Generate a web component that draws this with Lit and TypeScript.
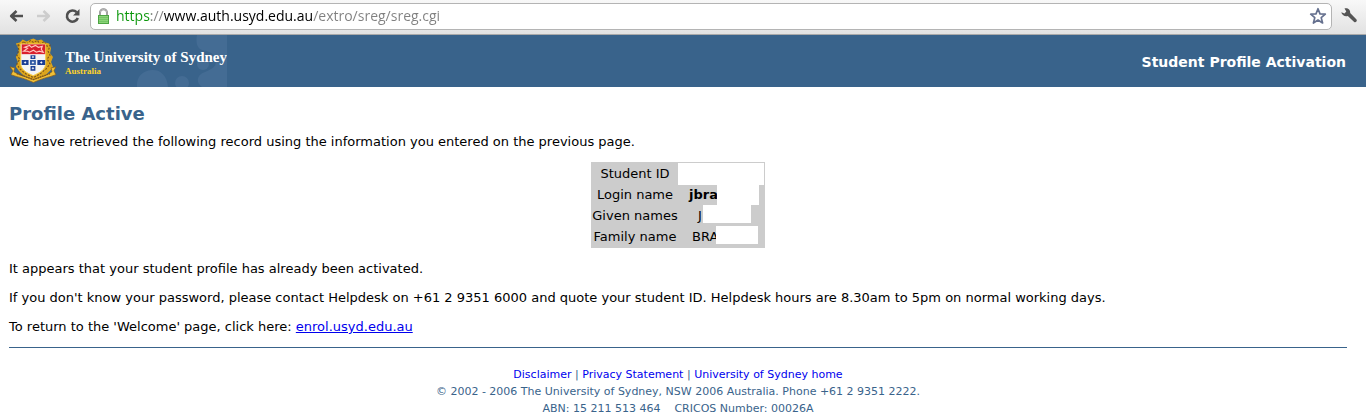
import { LitElement, html, css, svg } from "lit";
import { customElement } from "lit/decorators.js";
import { styleMap } from "lit/directives/style-map.js";

interface RecordRow {
  label: string;
  value: string;
  indent: number;
  gap: number;
  mask: number;
  height: number;
  strong?: boolean;
}

const rows: RecordRow[] = [
  { label: "Student ID", value: "", indent: 0, gap: 0, mask: 86, height: 22 },
  { label: "Login name", value: "jbra", indent: 11, gap: -1, mask: 42, height: 21, strong: true },
  { label: "Given names", value: "J", indent: 20, gap: 1, mask: 48, height: 18 },
  { label: "Family name", value: "BRA", indent: 14, gap: -2, mask: 42, height: 18 },
];

const star = (x: number, y: number) => svg`
  <path d="M${x} ${y - 1.5}l.5 1 1 .5-1 .5-.5 1-.5-1-1-.5 1-.5z" fill="#fff"></path>`;

@customElement("browser-bar")
export class BrowserBar extends LitElement {
  static styles = css`
    :host {
      display: flex;
      align-items: center;
      height: 35px;
      box-sizing: border-box;
      padding: 0 8px 2px;
      background: linear-gradient(#f8f8f8, #e2e2e2);
      border-bottom: 1px solid #a9a9a9;
    }
    .nav { display: flex; gap: 12px; margin-right: 9px; }
    button {
      display: block;
      padding: 0;
      border: 0;
      background: none;
      line-height: 0;
    }
    .address {
      flex: 1;
      display: flex;
      align-items: center;
      height: 27px;
      box-sizing: border-box;
      padding: 0 4px 0 6px;
      border: 1px solid #b4b4b4;
      border-radius: 5px;
      background: #fff;
    }
    .url {
      flex: 1;
      min-width: 0;
      height: 24px;
      margin-left: 6px;
      padding: 0;
      border: 0;
      outline: 0;
      font: 14px/24px "Open Sans", "Noto Sans", sans-serif;
      color: #808080;
      background: linear-gradient(90deg, #0a970a 35px, #808080 35px 48px, #000 48px 197px, #808080 197px);
      -webkit-background-clip: text;
      background-clip: text;
      -webkit-text-fill-color: transparent;
    }
    .tools { margin-left: 8px; }
  `;

  render() {
    return html`
      <div class="nav">
        <button aria-label="Back">
          <svg width="16" height="16" viewBox="0 0 16 16" fill="none" stroke="#505050" stroke-width="2.6" stroke-linejoin="round">
            <path d="M15 8H3.500M8.500 3 3.200 8l5.300 5"></path>
          </svg>
        </button>
        <button aria-label="Forward" disabled>
          <svg width="16" height="16" viewBox="0 0 16 16" fill="none" stroke="#cdcdcd" stroke-width="2.6" stroke-linejoin="round">
            <path d="M1 8h11.500M7.500 3l5.300 5-5.300 5"></path>
          </svg>
        </button>
        <button aria-label="Reload">
          <svg width="17" height="16" viewBox="0 0 17 16">
            <path d="M12.6 4.2A5.6 5.6 0 1 0 13.8 10" fill="none" stroke="#505050" stroke-width="2.6"></path>
            <path d="M15.5 1v6.5H9z" fill="#505050"></path>
          </svg>
        </button>
      </div>
      <div class="address">
        <svg width="13" height="17" viewBox="0 0 13 17">
          <path d="M3 8V4.8a3.5 3.5 0 0 1 7 0V8" fill="none" stroke="#8b8b8b" stroke-width="2"></path>
          <path d="M3 8V4.8a3.5 3.5 0 0 1 7 0V8" fill="none" stroke="#d0d0d0" stroke-width=".7"></path>
          <rect x="1.5" y="7.5" width="10" height="8" fill="#8bd478" stroke="#4da443"></rect>
          <path d="M2 9.5h9M2 11.5h9M2 13.5h9" stroke="#74c466"></path>
        </svg>
        <input class="url" type="text" aria-label="Address" spellcheck="false"
          value="https://www.auth.usyd.edu.au/extro/sreg/sreg.cgi">
        <button aria-label="Bookmark this page">
          <svg width="18" height="18" viewBox="0 0 18 18">
            <path d="M9 1.7l2 5.2 5.3.3-4.1 3.4 1.4 5.4L9 13l-4.600 3 1.400-5.400-4.100-3.400 5.300-.3z" fill="#fff"
              stroke="#66718f" stroke-width="1.7" stroke-linejoin="round"></path>
          </svg>
        </button>
      </div>
      <button class="tools" aria-label="Settings">
        <svg width="18" height="18" viewBox="0 0 18 18">
          <path d="M4.500 1.500c3-.9 6 1 5.700 4.500l6.300 6.500c1.200 1.400-.9 3.500-2.300 2.400L7.800 9C5 9.900 1.700 8.200 1.300 5.300l3.200 1.300 1.800-2z" fill="#555"></path>
        </svg>
      </button>
    `;
  }
}

@customElement("university-banner")
export class UniversityBanner extends LitElement {
  static styles = css`
    :host {
      display: flex;
      align-items: center;
      justify-content: space-between;
      height: 52px;
      background: #39638b;
      color: #fff;
    }
    .brand {
      display: grid;
      grid-template-columns: 227px;
      height: 52px;
      overflow: hidden;
    }
    .pattern, .identity { grid-area: 1 / 1; }
    .identity {
      display: flex;
      gap: 8px;
      padding: 3px 0 0 9px;
      color: inherit;
      text-decoration: none;
      z-index: 1;
    }
    .words { padding-top: 10px; white-space: nowrap; }
    .name, .country {
      display: block;
      font-family: "Liberation Serif", serif;
      font-weight: bold;
    }
    .name { font-size: 15px; line-height: 18px; }
    .country { font-size: 9px; line-height: 10px; color: #ffd42a; }
    .title {
      margin: 0;
      padding: 2px 20px 0 0;
      font: bold 14px/18px Verdana, "DejaVu Sans", sans-serif;
    }
  `;

  render() {
    return html`
      <div class="brand">
        <svg class="pattern" width="227" height="52" viewBox="0 0 227 52" fill="#446c94">
          <path d="M197 0h30v52h-25c-6-4-6-12 3-15 10-4 12-7 10-14-2-6-8-7-13-8-6-2-6-10-5-15z"></path>
          <path d="M137 52c-1-12 8-17 16-17s14 6 15 17z"></path>
          <circle cx="182" cy="48" r="7"></circle>
          <circle cx="203" cy="29" r="6"></circle>
        </svg>
        <a class="identity" href="#">
          <svg width="49" height="46" viewBox="0 0 49 46" aria-hidden="true">
            <path d="M7 5l4-1 3-3 4 2 4-2 3-1 4 2 4-1 4 3 4 1 2 5-1 5 3 4-2 5 2 5-3 4-4 4-6 4-5 2-6-2-7-4-4-4-3-4 2-5-2-5 3-5-1-5z" fill="#dca51c"></path>
            <path d="M9 6l3 2 3-5 3 3 4-4 3 2 4-2 3 4 4-3 3 5 3-1-2 6 2 4-3 4 3 5-4 5-6 5-7 4-8-4-6-5-3-5 3-5-3-4 2-5z" fill="none" stroke="#77501d" stroke-width="1.1" stroke-dasharray="2 1.5"></path>
            <path d="M12 5.500h25.500V25c0 7-6 10-12.800 13C18 35 12 32 12 25z" fill="#f4f4f2" stroke="#f6cf4b"></path>
            <path d="M13 6h24v10H13z" fill="#d91f2c"></path>
            <path d="M15 13l4-3-3-1 5-2 2 2 4-2 3 2 4-1-1 3 2 3-4-1-3 1-3-2-4 2-2-1z" fill="none" stroke="#ffc8c0" stroke-width="1.2"></path>
            <path d="M22 17h5v4h-5zM13 22h7v5h-7zM29 22h8v5h-8zM22 28h5v5h-5z" fill="#1b3f95"></path>
            <rect x="21.500" y="22" width="6" height="5" fill="#315aa4"></rect>
            ${star(24.5, 19)}${star(16.5, 24.5)}${star(24.5, 24.5)}${star(33, 24.5)}${star(24.5, 30.5)}
            <path d="M1 29l5 1-1 4c6 4 12 5 20 8 8-3 14-4 19-8l-1-4 5-1-2 4 2 4-6 2c-5 1-10 3-17 6-7-3-12-5-17-6l-6-2 2-4z" fill="#f0bf36" stroke="#81591c" stroke-width=".7"></path>
            <path d="M8 36c7 2 11 4 17 6 6-2 10-4 17-6" fill="none" stroke="#805616" stroke-width="1.3" stroke-dasharray="1.5 1"></path>
          </svg>
          <span class="words">
            <span class="name">The University of Sydney</span>
            <span class="country">Australia</span>
          </span>
        </a>
      </div>
      <h1 class="title">Student Profile Activation</h1>
    `;
  }
}

@customElement("app-root")
export class AppRoot extends LitElement {
  static styles = css`
    :host {
      display: block;
      background: #fff;
      color: #000;
      font: 13px/17px Verdana, "DejaVu Sans", sans-serif;
    }
    main { padding: 15px 19px 0 9px; }
    h2 { margin: 0 0 8px; font-size: 18px; line-height: 23px; color: #39638b; }
    p { margin: 0 0 12px; }
    a { color: #0000ee; }
    .record {
      margin: 0 auto 12px;
      border: 1px solid #ccc;
      border-spacing: 0;
      background: #ccc;
      line-height: 21px;
    }
    th, td { height: 21px; padding: 0; }
    th { width: 86px; font-weight: normal; white-space: nowrap; }
    td { width: 86px; }
    .value { display: flex; height: 21px; align-items: flex-start; }
    .strong { font-weight: bold; }
    .mask { background: #fff; flex: none; }
    footer {
      margin: 0 19px 0 9px;
      padding-top: 18px;
      border-top: 1px solid #39638b;
      text-align: center;
      font-size: 11px;
      color: #39638b;
    }
    footer p { margin: 0; }
    footer a { text-decoration: none; }
  `;

  render() {
    return html`
      <browser-bar></browser-bar>
      <university-banner></university-banner>
      <main>
        <h2>Profile Active</h2>
        <p>We have retrieved the following record using the information you entered on the previous page.</p>
        <table class="record">
          <tbody>
            ${rows.map((r) => html`
              <tr>
                <th scope="row">${r.label}</th>
                <td>
                  <div class="value" style=${styleMap({ paddingLeft: `${r.indent}px` })}>
                    ${r.value ? html`<span class=${r.strong ? "strong" : ""}>${r.value}</span>` : ""}
                    <span class="mask" style=${styleMap({ width: `${r.mask}px`, height: `${r.height}px`, marginLeft: `${r.gap}px` })}></span>
                  </div>
                </td>
              </tr>`)}
          </tbody>
        </table>
        <p>It appears that your student profile has already been activated.</p>
        <p>If you don't know your password, please contact Helpdesk on +61 2 9351 6000 and quote your student ID. Helpdesk hours are 8.30am to 5pm on normal working days.</p>
        <p>To return to the 'Welcome' page, click here: <a href="#">enrol.usyd.edu.au</a></p>
      </main>
      <footer>
        <p><a href="#">Disclaimer</a> | <a href="#">Privacy Statement</a> | <a href="#">University of Sydney home</a></p>
        <p>© 2002 - 2006 The University of Sydney, NSW 2006 Australia. Phone +61 2 9351 2222.</p>
        <p>ABN: 15 211 513 464 &nbsp;&nbsp; CRICOS Number: 00026A</p>
      </footer>
    `;
  }
}
